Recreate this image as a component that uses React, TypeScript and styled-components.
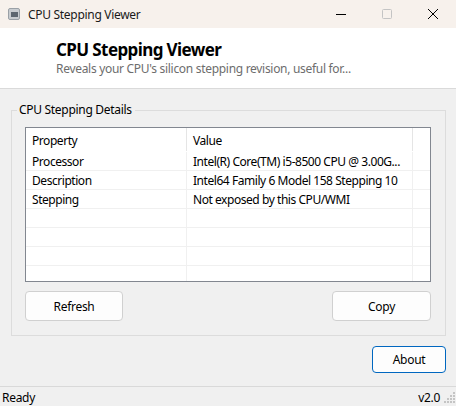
import React from "react";
import styled, { createGlobalStyle } from "styled-components";

const GlobalStyle = createGlobalStyle`
  html, body {
    margin: 0;
    padding: 0;
    background: #f0f0f0;
  }
  * {
    box-sizing: border-box;
  }
`;

const font = `"Segoe UI", "Noto Sans", "Open Sans", sans-serif`;

const Window = styled.div`
  width: 456px;
  height: 406px;
  display: flex;
  flex-direction: column;
  background: #f0f0f0;
  font-family: ${font};
  font-size: 12px;
  letter-spacing: -0.3px;
  color: #000;
  overflow: hidden;
`;

const TitleBar = styled.div`
  height: 28px;
  flex: none;
  display: flex;
  align-items: center;
  background: #f7f1ec;
  padding-left: 8px;
`;

const AppIcon = styled.div`
  width: 12px;
  height: 12px;
  border-radius: 2px;
  background: #c8ccd0;
  border: 1px solid #9aa0a6;
  display: flex;
  align-items: center;
  justify-content: center;
  margin-right: 8px;

  &::after {
    content: "";
    width: 7px;
    height: 5px;
    background: #5d6670;
  }
`;

const TitleText = styled.div`
  flex: 1;
  font-size: 12px;
  color: #1a1a1a;
`;

const CaptionButton = styled.div`
  width: 46px;
  height: 28px;
  display: flex;
  align-items: center;
  justify-content: center;
`;

const Header = styled.div`
  height: 61px;
  flex: none;
  background: #fff;
  border-bottom: 1px solid #dadada;
  padding: 11px 0 0 56px;
`;

const HeaderTitle = styled.div`
  font-size: 17px;
  font-weight: 700;
  line-height: 22px;
  letter-spacing: -0.6px;
  color: #000;
`;

const HeaderSubtitle = styled.div`
  font-size: 12px;
  line-height: 16px;
  color: #6d6d6d;
`;

const Body = styled.div`
  flex: 1;
  padding: 13px 10px 0 11px;
  display: flex;
  flex-direction: column;
`;

const Group = styled.fieldset`
  margin: 0;
  padding: 9px 14px 14px 13px;
  border: 1px solid #dcdcdc;
  border-radius: 0;
  display: flex;
  flex-direction: column;
`;

const GroupLegend = styled.legend`
  padding: 0 3px 0 2px;
  margin-left: -8px;
  font-size: 12px;
  line-height: 16px;
  color: #000;
`;

const ListView = styled.div`
  height: 155px;
  border: 1px solid #828790;
  background: #fff;
  overflow: hidden;
  letter-spacing: -0.45px;
`;

const Row = styled.div<{ $header?: boolean }>`
  display: grid;
  grid-template-columns: 161px 226px 1fr;
  height: ${(p) => (p.$header ? "24px" : "19px")};
  border-bottom: 1px solid ${(p) => (p.$header ? "transparent" : "#f0f0f0")};
`;

const Cell = styled.div<{ $header?: boolean }>`
  padding: ${(p) => (p.$header ? "3px" : "2px")} 0 0 6px;
  display: flex;
  align-items: center;
  white-space: nowrap;
  border-right: 1px solid ${(p) => (p.$header ? "#e5e5e5" : "#f0f0f0")};
  line-height: 16px;
`;

const Filler = styled.div``;

const ButtonRow = styled.div`
  display: flex;
  justify-content: space-between;
  margin-top: 9px;
`;

const Button = styled.button<{ $width: number; $focused?: boolean }>`
  width: ${(p) => p.$width}px;
  height: ${(p) => (p.$focused ? 27 : 30)}px;
  font-family: ${font};
  font-size: 12px;
  letter-spacing: -0.3px;
  color: #000;
  background: #fdfdfd;
  border: 1px solid ${(p) => (p.$focused ? "#0067c0" : "#d0d0d0")};
  border-radius: 4px;
  padding: 0;
`;

const FooterActions = styled.div`
  display: flex;
  justify-content: flex-end;
  margin-top: 10px;
`;

const StatusBar = styled.div`
  height: 20px;
  flex: none;
  border-top: 1px solid #d9d9d9;
  display: flex;
  align-items: center;
  justify-content: space-between;
  padding: 1px 0 0 2px;
  font-size: 12px;
`;

const StatusRight = styled.div`
  display: flex;
  align-items: center;
  gap: 4px;
`;

const rows: [string, string][] = [
  ["Processor", "Intel(R) Core(TM) i5-8500 CPU @ 3.00G..."],
  ["Description", "Intel64 Family 6 Model 158 Stepping 10"],
  ["Stepping", "Not exposed by this CPU/WMI"],
  ["", ""],
  ["", ""],
  ["", ""],
  ["", ""],
];

const Grip = () => (
  <svg width="12" height="12" viewBox="0 0 12 12">
    {[
      [9, 1],
      [6, 4],
      [9, 4],
      [3, 7],
      [6, 7],
      [9, 7],
      [0, 10],
      [3, 10],
      [6, 10],
      [9, 10],
    ].map(([x, y], i) => (
      <rect key={i} x={x} y={y} width="2" height="2" fill="#c4c4c4" />
    ))}
  </svg>
);

export default function App() {
  return (
    <Window>
      <GlobalStyle />
      <TitleBar>
        <AppIcon />
        <TitleText>CPU Stepping Viewer</TitleText>
        <CaptionButton>
          <svg width="12" height="12" viewBox="0 0 12 12">
            <line x1="1" y1="6.5" x2="11" y2="6.5" stroke="#000" strokeWidth="1" />
          </svg>
        </CaptionButton>
        <CaptionButton>
          <svg width="12" height="12" viewBox="0 0 12 12">
            <rect x="1.5" y="1.5" width="9" height="9" rx="1" fill="none" stroke="#c4c4c4" />
          </svg>
        </CaptionButton>
        <CaptionButton>
          <svg width="12" height="12" viewBox="0 0 12 12">
            <path d="M1 1 L11 11 M11 1 L1 11" stroke="#000" strokeWidth="1" />
          </svg>
        </CaptionButton>
      </TitleBar>

      <Header>
        <HeaderTitle>CPU Stepping Viewer</HeaderTitle>
        <HeaderSubtitle>
          Reveals your CPU's silicon stepping revision, useful for...
        </HeaderSubtitle>
      </Header>

      <Body>
        <Group>
          <GroupLegend>CPU Stepping Details</GroupLegend>
          <ListView>
            <Row $header>
              <Cell $header>Property</Cell>
              <Cell $header>Value</Cell>
              <Filler />
            </Row>
            {rows.map(([k, v], i) => (
              <Row key={i}>
                <Cell>{k}</Cell>
                <Cell>{v}</Cell>
                <Filler />
              </Row>
            ))}
          </ListView>
          <ButtonRow>
            <Button $width={98}>Refresh</Button>
            <Button $width={99}>Copy</Button>
          </ButtonRow>
        </Group>
        <FooterActions>
          <Button $width={74} $focused>
            About
          </Button>
        </FooterActions>
      </Body>

      <StatusBar>
        <span>Ready</span>
        <StatusRight>
          <span>v2.0</span>
          <Grip />
        </StatusRight>
      </StatusBar>
    </Window>
  );
}
